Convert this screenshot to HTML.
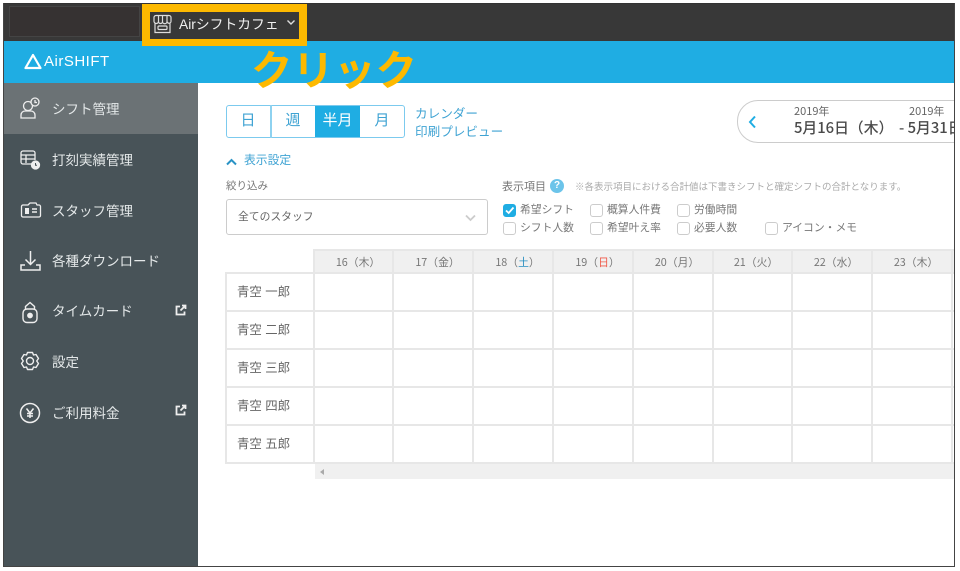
<!DOCTYPE html>
<html lang="ja"><head><meta charset="utf-8"><title>AirSHIFT</title>
<style>
html,body{margin:0;padding:0;background:#fff}
#p{position:relative;width:960px;height:571px;overflow:hidden;background:#fff;font-family:"Liberation Sans","Noto Sans CJK JP",sans-serif;color:#666}
#p div{position:absolute;white-space:nowrap}
#c{left:0;top:0;width:960px;height:571px}
.b{filter:blur(.35px)}
.nav{left:52px;font-size:13.500px;color:#e4e8e9;line-height:20px;filter:blur(.35px)}
.ic{position:absolute;overflow:visible;filter:blur(.25px)}
.lb{font-size:10.800px;line-height:14px;color:#777;filter:blur(.35px)}
.cb{width:11px;height:11px;border:1px solid #ccc;border-radius:3px;background:#fff}
.nm{left:237px;font-size:12.400px;line-height:16px;color:#666;filter:blur(.35px)}
.hd{top:251px;height:22px;line-height:22px;text-align:center;text-indent:8px;font-size:10.800px;color:#777;font-family:"Noto Sans CJK JP",sans-serif;filter:blur(.35px)}
.v{top:249px;width:2px;height:215px;background:#e7e7e7}
.h{left:226px;width:728px;height:2px;background:#e7e7e7}
.tab{top:105px;height:33px;text-align:center;font-size:15px;line-height:32px;color:#3fa3d3;filter:blur(.3px)}
</style></head><body><div id="p"><div id="c">
<!-- top bar -->
<div style="left:3px;top:4px;width:951px;height:37px;background:#383838"></div>
<div style="left:9px;top:6px;width:129px;height:29px;background:#363232;border:1px solid #444"></div>
<!-- blue bar -->
<div style="left:3px;top:41px;width:951px;height:42px;background:#1fade3"></div>
<!-- yellow highlight -->
<div style="left:142px;top:4px;width:165px;height:42px;background:#fdb900"></div>
<div style="left:150px;top:12px;width:149px;height:27px;background:#383838"></div>
<svg class="ic" style="left:152px;top:14px" width="21" height="20" viewBox="0 0 21 20" fill="none" stroke="#ddd" stroke-width="1.200"><path d="M4 1.500h13a2 2 0 0 1 2 2V7a2 2 0 0 1-4 .5 2 2 0 0 1-4.500 0 2 2 0 0 1-4 0A2 2 0 0 1 2 7V3.500a2 2 0 0 1 2-2z"/><path d="M6.500 1.500v6M10.500 1.500v6M15 1.500v6M3 9.500V18.500h15V9.500"/><rect x="6" y="12" width="9" height="3.500" rx="1"/></svg>
<div class="b" style="left:179px;top:16px;font-size:13.800px;color:#f0f0f0;line-height:18px">Airシフトカフェ</div>
<svg class="ic" style="left:286px;top:19px" width="10" height="7" viewBox="0 0 10 7" fill="none" stroke="#ddd" stroke-width="1.400"><path d="M1.500 1.500l3.500 3.500 3.500-3.500"/></svg>
<svg class="ic" style="left:24px;top:53px" width="18" height="17" viewBox="0 0 18 17" fill="none" stroke="#fff" stroke-width="2.200" stroke-linejoin="round"><path d="M9 2L1.500 15h15z"/></svg>
<div class="b" style="left:44px;top:52px;font-size:15px;line-height:20px;color:#fff;letter-spacing:.5px">AirSHIFT</div>
<div class="b" style="left:251px;top:42px;font-size:41.500px;line-height:50px;font-weight:700;color:#fdb900;font-family:'Noto Sans CJK JP',sans-serif">クリック</div>
<!-- sidebar -->
<div style="left:3px;top:83px;width:195px;height:483px;background:#485358"></div>
<div style="left:3px;top:83px;width:195px;height:51px;background:#6b7275"></div>
<svg class="ic" style="left:19px;top:97px" width="22" height="23" viewBox="0 0 22 23" fill="none" stroke="#eee" stroke-width="1.300"><circle cx="9" cy="9" r="4.500"/><path d="M2 21v-3a4 4 0 0 1 4-4h6a4 4 0 0 1 4 4v3z"/><circle cx="16" cy="5" r="4" fill="#6b7275"/><path d="M16 3v2.500h2"/></svg>
<div class="nav" style="top:100px">シフト管理</div>
<svg class="ic" style="left:19px;top:149px" width="23" height="22" viewBox="0 0 23 22" fill="none" stroke="#eee" stroke-width="1.300"><path d="M15 15H4a2 2 0 0 1-2-2V4a2 2 0 0 1 2-2h10a2 2 0 0 1 2 2v7M2 6h14M2 10h14M7 6v8"/><circle cx="16.500" cy="16" r="4" fill="#eee"/><path d="M16.500 14v2.200h1.500" stroke="#485358" stroke-width="1"/></svg>
<div class="nav" style="top:151px">打刻実績管理</div>
<svg class="ic" style="left:20px;top:201px" width="22" height="18" viewBox="0 0 22 18" fill="none" stroke="#eee" stroke-width="1.300"><path d="M3 4h5l2-2h6l1 2h2a1.500 1.500 0 0 1 1.500 1.500v9A1.500 1.500 0 0 1 19 16H3a1.500 1.500 0 0 1-1.500-1.500v-9A1.500 1.500 0 0 1 3 4z"/><rect x="5" y="7" width="4" height="6" fill="#eee" stroke="none"/><path d="M12 8h5M12 11h5" stroke-width="1.500"/></svg>
<div class="nav" style="top:202px">スタッフ管理</div>
<svg class="ic" style="left:19px;top:249px" width="23" height="23" viewBox="0 0 23 23" fill="none" stroke="#eee" stroke-width="1.500"><path d="M11.500 2v13M6.500 10.500l5 5 5-5"/><path d="M6 16H2v5h19v-5h-4"/></svg>
<div class="nav" style="top:252px">各種ダウンロード</div>
<svg class="ic" style="left:21px;top:300px" width="18" height="24" viewBox="0 0 18 24" fill="none" stroke="#eee" stroke-width="1.400"><path d="M4.500 9V6.500L9 2.500l4.500 4V9"/><rect x="2" y="9" width="14" height="13.500" rx="4"/><circle cx="9" cy="15.500" r="2.200" fill="#eee"/></svg>
<div class="nav" style="top:302px">タイムカード</div>
<svg class="ic" style="left:175px;top:304px" width="12" height="12" viewBox="0 0 12 12" fill="none" stroke="#eee" stroke-width="1.800"><path d="M5 2.500H1.500v8H9.500V7.500M7 1.500h3.500V5M10.500 1.500L5.500 6.500"/></svg>
<svg class="ic" style="left:20px;top:351px" width="20" height="21" viewBox="0 0 20 21" fill="none" stroke="#eee" stroke-width="1.400"><path d="M7.500 1.500h5l1 2.500 2.500-.5 2.500 4-1.800 2.500 1.800 2.500-2.500 4-2.500-.5-1 2.500h-5l-1-2.500-2.500.5-2.500-4L3.300 10 1.500 7.500l2.500-4 2.500.5z" stroke-linejoin="round"/><circle cx="10" cy="10" r="3.500"/></svg>
<div class="nav" style="top:353px">設定</div>
<svg class="ic" style="left:19px;top:402px" width="22" height="22" viewBox="0 0 22 22" fill="none" stroke="#eee" stroke-width="1.500"><circle cx="11" cy="11" r="9.500"/><path d="M7.500 6.500L11 11l3.500-4.500M11 11v5M8 11.500h6M8 14h6"/></svg>
<div class="nav" style="top:404px">ご利用料金</div>
<svg class="ic" style="left:175px;top:404px" width="12" height="12" viewBox="0 0 12 12" fill="none" stroke="#eee" stroke-width="1.800"><path d="M5 2.500H1.500v8H9.500V7.500M7 1.500h3.500V5M10.500 1.500L5.500 6.500"/></svg>
<!-- tabs -->
<div class="tab" style="left:226px;width:44px">日</div>
<div class="tab" style="left:271px;width:44px">週</div>
<div class="tab" style="left:315px;width:45px;background:#1fade3;color:#fff">半月</div>
<div class="tab" style="left:360px;width:44px">月</div>
<div style="left:226px;top:105px;width:177px;height:31px;border:1.500px solid #7ccaee;border-radius:3px"></div>
<div style="left:270px;top:105px;width:2px;height:33px;background:#8ed2f0"></div>
<div class="b" style="left:415px;top:105px;font-size:12.600px;line-height:18px;color:#3fa3d3">カレンダー</div>
<div class="b" style="left:415px;top:123px;font-size:12.600px;line-height:18px;color:#3fa3d3">印刷プレビュー</div>
<!-- date picker -->
<div style="left:737px;top:100px;width:240px;height:41px;border:1px solid #ccc;border-radius:21px;background:#fff"></div>
<svg class="ic" style="left:748px;top:115px" width="9" height="14" viewBox="0 0 9 14" fill="none" stroke="#1fade3" stroke-width="2"><path d="M7 1.500L2 7l5 5.500"/></svg>
<div class="b" style="left:794px;top:104px;font-size:11px;line-height:14px;color:#666;font-family:'Noto Sans CJK JP',sans-serif">2019年</div>
<div class="b" style="left:909px;top:104px;font-size:11px;line-height:14px;color:#666;font-family:'Noto Sans CJK JP',sans-serif">2019年</div>
<div class="b" style="left:794px;top:118px;font-size:14.800px;line-height:20px;color:#4a4a4a;font-weight:500;font-family:'Noto Sans CJK JP',sans-serif">5月16日（木）</div>
<div class="b" style="left:899px;top:118px;font-size:14.800px;line-height:20px;color:#4a4a4a;font-weight:500;font-family:'Noto Sans CJK JP',sans-serif">- 5月31日</div>
<!-- settings -->
<svg class="ic" style="left:226px;top:158px" width="11" height="8" viewBox="0 0 11 8" fill="none" stroke="#2a93c5" stroke-width="2"><path d="M1 6.500l4.500-4.500 4.500 4.500"/></svg>
<div class="b" style="left:244px;top:152px;font-size:11.800px;line-height:17px;color:#3fa3d3">表示設定</div>
<div class="b" style="left:226px;top:179px;font-size:10.500px;line-height:14px;color:#777">絞り込み</div>
<div style="left:226px;top:199px;width:260px;height:34px;border:1px solid #ccc;border-radius:3px"></div>
<div class="b" style="left:238px;top:209px;font-size:10.800px;line-height:16px;color:#666">全てのスタッフ</div>
<svg class="ic" style="left:465px;top:214px" width="11" height="8" viewBox="0 0 11 8" fill="none" stroke="#ccc" stroke-width="1.800"><path d="M1 1.500l4.500 4.500 4.500-4.500"/></svg>
<div class="b" style="left:502px;top:180px;font-size:11px;line-height:14px;color:#777">表示項目</div>
<div class="b" style="left:550px;top:179px;width:14px;height:14px;border-radius:50%;background:#6cc4ea;color:#fff;font-size:10px;line-height:14px;text-align:center;font-weight:700">?</div>
<div class="b" style="left:575px;top:181px;font-size:9.500px;line-height:13px;color:#aaa">※各表示項目における合計値は下書きシフトと確定シフトの合計となります。</div>
<div class="cb" style="left:503px;top:204px;background:#1fade3;border-color:#1fade3"></div>
<svg class="ic" style="left:505px;top:206px" width="10" height="9" viewBox="0 0 10 9" fill="none" stroke="#fff" stroke-width="1.800"><path d="M1 4.500l2.700 2.500L8.500 1.500"/></svg>
<div class="lb" style="left:520px;top:203px">希望シフト</div>
<div class="cb" style="left:590px;top:204px"></div><div class="lb" style="left:607px;top:203px">概算人件費</div>
<div class="cb" style="left:677px;top:204px"></div><div class="lb" style="left:694px;top:203px">労働時間</div>
<div class="cb" style="left:503px;top:222px"></div><div class="lb" style="left:520px;top:221px">シフト人数</div>
<div class="cb" style="left:590px;top:222px"></div><div class="lb" style="left:607px;top:221px">希望叶え率</div>
<div class="cb" style="left:677px;top:222px"></div><div class="lb" style="left:694px;top:221px">必要人数</div>
<div class="cb" style="left:765px;top:222px"></div><div class="lb" style="left:782px;top:221px">アイコン・メモ</div>
<!-- grid -->
<div style="left:314px;top:250px;width:640px;height:23px;background:#f0f0f0"></div>
<div style="left:314px;top:249px;width:640px;height:2px;background:#e7e7e7"></div>
<div class="h" style="top:272px"></div><div class="h" style="top:310px"></div><div class="h" style="top:348px"></div><div class="h" style="top:386px"></div><div class="h" style="top:424px"></div><div class="h" style="top:462px"></div>
<div style="left:225px;top:272px;width:2px;height:192px;background:#e7e7e7"></div>
<div class="v" style="left:313px"></div><div class="v" style="left:392px"></div><div class="v" style="left:472px"></div><div class="v" style="left:552px"></div><div class="v" style="left:632px"></div><div class="v" style="left:712px"></div><div class="v" style="left:791px"></div><div class="v" style="left:871px"></div><div class="v" style="left:951px"></div>
<div class="hd" style="left:315px;width:78px">16（木）</div>
<div class="hd" style="left:394px;width:79px">17（金）</div>
<div class="hd" style="left:474px;width:79px">18（<span style="color:#2a8fc0">土</span>）</div>
<div class="hd" style="left:554px;width:79px">19（<span style="color:#ef5a4a">日</span>）</div>
<div class="hd" style="left:634px;width:78px">20（月）</div>
<div class="hd" style="left:713px;width:78px">21（火）</div>
<div class="hd" style="left:793px;width:78px">22（水）</div>
<div class="hd" style="left:873px;width:78px">23（木）</div>
<div class="nm" style="top:284px">青空 一郎</div>
<div class="nm" style="top:322px">青空 二郎</div>
<div class="nm" style="top:360px">青空 三郎</div>
<div class="nm" style="top:398px">青空 四郎</div>
<div class="nm" style="top:436px">青空 五郎</div>
<div style="left:315px;top:464px;width:639px;height:15px;background:#f0f0f0"></div>
<div style="left:320px;top:469px;width:0;height:0;border:3px solid transparent;border-right:4px solid #aaa;border-left:0"></div>
</div>
<!-- page mask + frame lines -->
<div style="left:955px;top:0;width:5px;height:571px;background:#fff"></div>
<div style="left:0;top:567px;width:960px;height:4px;background:#fff"></div>
<div style="left:3px;top:3px;width:952px;height:1px;background:#333"></div>
<div style="left:3px;top:566px;width:952px;height:1px;background:#444"></div>
<div style="left:3px;top:3px;width:1px;height:564px;background:#444"></div>
<div style="left:954px;top:3px;width:1px;height:564px;background:#444"></div>
</div></body></html>
